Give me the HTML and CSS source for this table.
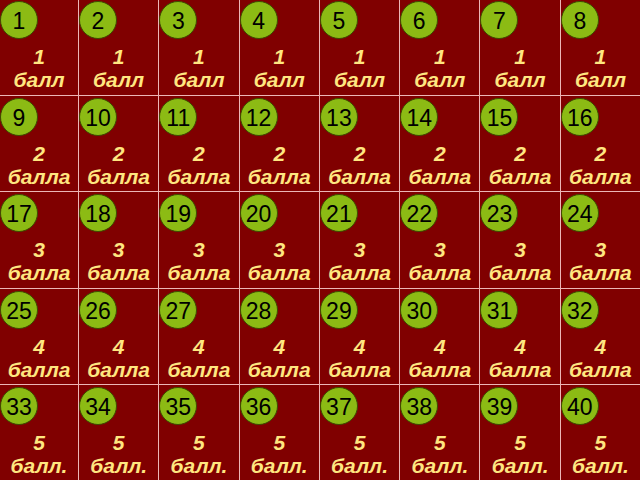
FILE: index.html
```html
<!DOCTYPE html>
<html lang="ru">
<head>
<meta charset="utf-8">
<title>Баллы</title>
<link rel="stylesheet" href="styles.css">
</head>
<body>
<div class="board">
  <div class="cell"><div class="num">1</div><div class="score"><div>1</div><div>балл</div></div></div>
  <div class="cell"><div class="num">2</div><div class="score"><div>1</div><div>балл</div></div></div>
  <div class="cell"><div class="num">3</div><div class="score"><div>1</div><div>балл</div></div></div>
  <div class="cell"><div class="num">4</div><div class="score"><div>1</div><div>балл</div></div></div>
  <div class="cell"><div class="num">5</div><div class="score"><div>1</div><div>балл</div></div></div>
  <div class="cell"><div class="num">6</div><div class="score"><div>1</div><div>балл</div></div></div>
  <div class="cell"><div class="num">7</div><div class="score"><div>1</div><div>балл</div></div></div>
  <div class="cell"><div class="num">8</div><div class="score"><div>1</div><div>балл</div></div></div>

  <div class="cell"><div class="num">9</div><div class="score"><div>2</div><div>балла</div></div></div>
  <div class="cell"><div class="num">10</div><div class="score"><div>2</div><div>балла</div></div></div>
  <div class="cell"><div class="num">11</div><div class="score"><div>2</div><div>балла</div></div></div>
  <div class="cell"><div class="num">12</div><div class="score"><div>2</div><div>балла</div></div></div>
  <div class="cell"><div class="num">13</div><div class="score"><div>2</div><div>балла</div></div></div>
  <div class="cell"><div class="num">14</div><div class="score"><div>2</div><div>балла</div></div></div>
  <div class="cell"><div class="num">15</div><div class="score"><div>2</div><div>балла</div></div></div>
  <div class="cell"><div class="num">16</div><div class="score"><div>2</div><div>балла</div></div></div>

  <div class="cell"><div class="num">17</div><div class="score"><div>3</div><div>балла</div></div></div>
  <div class="cell"><div class="num">18</div><div class="score"><div>3</div><div>балла</div></div></div>
  <div class="cell"><div class="num">19</div><div class="score"><div>3</div><div>балла</div></div></div>
  <div class="cell"><div class="num">20</div><div class="score"><div>3</div><div>балла</div></div></div>
  <div class="cell"><div class="num">21</div><div class="score"><div>3</div><div>балла</div></div></div>
  <div class="cell"><div class="num">22</div><div class="score"><div>3</div><div>балла</div></div></div>
  <div class="cell"><div class="num">23</div><div class="score"><div>3</div><div>балла</div></div></div>
  <div class="cell"><div class="num">24</div><div class="score"><div>3</div><div>балла</div></div></div>

  <div class="cell"><div class="num">25</div><div class="score"><div>4</div><div>балла</div></div></div>
  <div class="cell"><div class="num">26</div><div class="score"><div>4</div><div>балла</div></div></div>
  <div class="cell"><div class="num">27</div><div class="score"><div>4</div><div>балла</div></div></div>
  <div class="cell"><div class="num">28</div><div class="score"><div>4</div><div>балла</div></div></div>
  <div class="cell"><div class="num">29</div><div class="score"><div>4</div><div>балла</div></div></div>
  <div class="cell"><div class="num">30</div><div class="score"><div>4</div><div>балла</div></div></div>
  <div class="cell"><div class="num">31</div><div class="score"><div>4</div><div>балла</div></div></div>
  <div class="cell"><div class="num">32</div><div class="score"><div>4</div><div>балла</div></div></div>

  <div class="cell"><div class="num">33</div><div class="score"><div>5</div><div>балл.</div></div></div>
  <div class="cell"><div class="num">34</div><div class="score"><div>5</div><div>балл.</div></div></div>
  <div class="cell"><div class="num">35</div><div class="score"><div>5</div><div>балл.</div></div></div>
  <div class="cell"><div class="num">36</div><div class="score"><div>5</div><div>балл.</div></div></div>
  <div class="cell"><div class="num">37</div><div class="score"><div>5</div><div>балл.</div></div></div>
  <div class="cell"><div class="num">38</div><div class="score"><div>5</div><div>балл.</div></div></div>
  <div class="cell"><div class="num">39</div><div class="score"><div>5</div><div>балл.</div></div></div>
  <div class="cell"><div class="num">40</div><div class="score"><div>5</div><div>балл.</div></div></div>
</div>
</body>
</html>
```

FILE: styles.css
```css
html, body {
  margin: 0;
  padding: 0;
  width: 640px;
  height: 480px;
  overflow: hidden;
  background: #800000;
  font-family: "Liberation Sans", Arial, sans-serif;
}

.board {
  display: grid;
  grid-template-columns: 79px repeat(7, 80.3px);
  grid-template-rows: repeat(5, 96.2px);
  width: 642px;
}

.cell {
  display: flex;
  flex-direction: column;
  border-right: 1px solid #ecb6b6;
  border-bottom: 1px solid #ecb6b6;
  box-sizing: border-box;
  min-width: 0;
}

.num {
  width: 38px;
  height: 38px;
  margin-top: 2px;
  box-sizing: border-box;
  border: 1px solid #3d4d00;
  border-radius: 50%;
  background: #8cbb14;
  color: #000;
  font-size: 23px;
  line-height: 38px;
  text-align: center;
  flex: none;
}

.cell:nth-child(-n+8) .num {
  margin-top: 1px;
}

.score {
  margin-top: 6px;
  text-align: center;
  color: #ffe680;
  font-weight: bold;
  font-style: italic;
  font-size: 21px;
  line-height: 23px;
}
```
